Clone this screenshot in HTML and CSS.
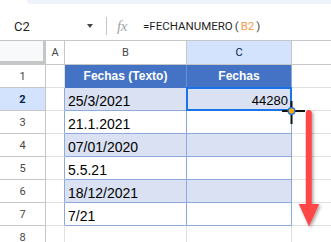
FILE: index.html
```html
<!DOCTYPE html>
<html lang="es">
<head>
<meta charset="utf-8">
<title>FECHANUMERO</title>
<link rel="stylesheet" href="styles.css">
</head>
<body>
<div class="topband"></div>
<div class="formula-bar">
  <div class="namebox"><span class="ref">C2</span><span class="caret"></span></div>
  <div class="sep"></div>
  <div class="fx">fx</div>
  <div class="formula">=FECHANUMERO<span class="paren">(</span><span class="arg">B2</span><span class="paren">)</span></div>
</div>
<div class="sheet">
  <div class="corner"><div class="corner-inner"></div></div>
  <div class="ch">A</div>
  <div class="ch">B</div>
  <div class="ch ch-sel">C</div>
  <div class="ch ch-last"></div>

  <div class="rh">1</div>
  <div class="g"></div>
  <div class="th th-b">Fechas (Texto)</div>
  <div class="th th-c">Fechas</div>
  <div class="d"></div>

  <div class="rh rh-sel">2</div>
  <div class="g edge"></div>
  <div class="td alt">25/3/2021</div>
  <div class="td alt num sel">44280</div>
  <div class="d"></div>

  <div class="rh">3</div>
  <div class="g edge"></div>
  <div class="td">21.1.2021</div>
  <div class="td"></div>
  <div class="d"></div>

  <div class="rh">4</div>
  <div class="g edge"></div>
  <div class="td alt">07/01/2020</div>
  <div class="td alt"></div>
  <div class="d"></div>

  <div class="rh">5</div>
  <div class="g edge"></div>
  <div class="td">5.5.21</div>
  <div class="td"></div>
  <div class="d"></div>

  <div class="rh">6</div>
  <div class="g edge"></div>
  <div class="td alt">18/12/2021</div>
  <div class="td alt"></div>
  <div class="d"></div>

  <div class="rh">7</div>
  <div class="g edge"></div>
  <div class="td">7/21</div>
  <div class="td"></div>
  <div class="d"></div>

  <div class="rh">8</div>
  <div class="g"></div>
  <div class="g"></div>
  <div class="g"></div>
  <div class="d"></div>
</div>
<svg class="overlay" width="331" height="242" viewBox="0 0 331 242" aria-hidden="true">
  <defs>
    <filter id="sh" x="-50%" y="-10%" width="200%" height="130%">
      <feDropShadow dx="1.5" dy="1.5" stdDeviation="1.5" flood-color="#000" flood-opacity="0.35"/>
    </filter>
  </defs>
  <g filter="url(#sh)" fill="#ff4747" stroke="none">
    <line x1="308.8" y1="113" x2="308.8" y2="206" stroke="#ff4747" stroke-width="6" stroke-linecap="round"/>
    <polygon points="298.8,204 319.3,204 309,226.5"/>
  </g>
  <rect x="282" y="110" width="23" height="2" fill="#111"/>
  <rect x="290.5" y="101" width="2" height="23" fill="#111"/>
  <circle cx="291.5" cy="111" r="3.3" fill="#f9ab00" stroke="#1a73e8" stroke-width="1.3"/>
</svg>
</body>
</html>
```
FILE: styles.css
```css
html, body {
  margin: 0;
  padding: 0;
  background: #ffffff;
}
body {
  position: relative;
  width: 331px;
  height: 242px;
  overflow: hidden;
  font-family: "Roboto", "Liberation Sans", sans-serif;
}
.topband {
  height: 4px;
  margin-left: 27px;
  background: #eef2f9;
  border-bottom-left-radius: 8px;
}
.formula-bar {
  display: flex;
  align-items: center;
  height: 28px;
  margin-top: 8px;
}
.namebox {
  width: 98px;
  box-sizing: border-box;
  padding-left: 14px;
  padding-right: 5px;
  display: flex;
  align-items: center;
  justify-content: space-between;
}
.ref {
  font-size: 13px;
  color: #1f1f1f;
}
.caret {
  width: 0;
  height: 0;
  border-left: 3.5px solid transparent;
  border-right: 3.5px solid transparent;
  border-top: 4px solid #444746;
}
.sep {
  width: 1px;
  height: 18px;
  margin-left: 8px;
  background: #c4c7c5;
}
.fx {
  margin-left: 10px;
  width: 16px;
  font-family: "Liberation Serif", serif;
  font-style: italic;
  font-size: 15px;
  color: #a3a3a3;
  letter-spacing: -0.5px;
}
.formula {
  margin-left: 10px;
  font-size: 11.5px;
  color: #1f1f1f;
}
.paren {
  color: #444746;
  margin: 0 2px;
}
.arg {
  color: #f29b4b;
}
.sheet {
  display: grid;
  grid-template-columns: 46px 19px 122px 105px 39px;
  grid-template-rows: 24px repeat(8, 23px);
  border-top: 1px solid #c4c7c5;
}
.sheet > div {
  box-sizing: border-box;
}
.corner {
  background: #ffffff;
  border-right: 1px solid #c4c7c5;
  border-bottom: 1px solid #c4c7c5;
}
.corner-inner {
  height: 20px;
  background: #f8f9fa;
  border-right: 2px solid #c4c7c5;
  border-bottom: 3px solid #c4c7c5;
}
.ch {
  display: flex;
  align-items: center;
  justify-content: center;
  font-size: 11px;
  color: #444746;
  border-right: 1px solid #c4c7c5;
  border-bottom: 1px solid #c4c7c5;
}
.ch-sel {
  background: #d3e3fd;
  color: #041e49;
}
.ch-last {
  border-right: none;
}
.rh {
  display: flex;
  align-items: center;
  justify-content: center;
  font-size: 11px;
  color: #444746;
  border-right: 1px solid #c4c7c5;
  border-bottom: 1px solid #c4c7c5;
}
.rh-sel {
  background: #d3e3fd;
  color: #041e49;
  font-weight: bold;
}
.g {
  border-right: 1px solid #e1e1e1;
  border-bottom: 1px solid #e1e1e1;
}
.g.edge {
  border-right-color: #8eaadb;
}
.d {
  border-bottom: 1px solid #e1e1e1;
}
.th {
  display: flex;
  align-items: center;
  justify-content: center;
  background: #4472c4;
  color: #ffffff;
  font-family: "Liberation Sans", Arial, sans-serif;
  font-weight: bold;
  font-size: 12px;
  border-bottom: 1px solid #4472c4;
}
.th-b {
  border-right: 1px solid #6d8ed3;
}
.th-c {
  border-right: 1px solid #8eaadb;
}
.td {
  display: flex;
  align-items: flex-end;
  padding: 0 3px 1px 3px;
  font-family: "Liberation Sans", Arial, sans-serif;
  font-size: 14px;
  line-height: 16px;
  color: #000000;
  border-right: 1px solid #8eaadb;
  border-bottom: 1px solid #8eaadb;
}
.alt {
  background: #d9e1f2;
}
.num {
  justify-content: flex-end;
  font-size: 13px;
  padding-right: 3px;
}
.sel {
  position: relative;
}
.sel::after {
  content: "";
  position: absolute;
  top: -1px;
  left: -1px;
  right: -1px;
  bottom: -1px;
  border: 2px solid #1a73e8;
}
.overlay {
  position: absolute;
  left: 0;
  top: 0;
  pointer-events: none;
}
```
